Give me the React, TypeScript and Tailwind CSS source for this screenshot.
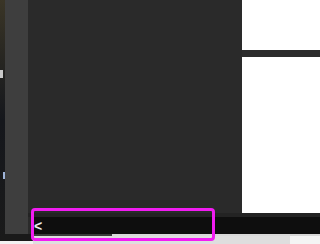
export default function App() {
  return (
    <div className="relative flex h-[244px] w-[320px] overflow-hidden bg-[#161616] font-['Liberation_Sans',sans-serif]">
      {/* wallpaper sliver */}
      <div className="relative h-[241px] w-[5px] bg-gradient-to-b from-[#3a3526] via-[#15171c] to-[#1a1a1a]">
        <div className="absolute left-0 top-[70px] h-[8px] w-[3px] bg-[#c9c9c9]" />
        <div className="absolute left-[3px] top-[172px] h-[7px] w-[2px] bg-[#9fb4d8]" />
      </div>

      <div className="flex flex-1 flex-col">
        <div className="flex h-[234px]">
          <div className="w-[23px] bg-[#3e3e3e]" />
          <div className="flex flex-1 flex-col bg-[#2a2a2a]">
            <div className="flex h-[213px]">
              <div className="w-[214px] bg-[#2a2a2a]" />
              <div className="flex flex-1 flex-col bg-white">
                <div className="h-[50px]" />
                <div className="h-[7px] bg-[#2c2c2c]" />
                <div className="flex-1" />
              </div>
            </div>
            <div className="h-[4px] bg-[#232323]" />
            <div className="ml-[5px] flex h-[17px] items-center bg-[#0e0e0e] pl-[1px] text-[14px] font-bold leading-none text-[#ececec]">
              &lt;
            </div>
          </div>
        </div>
        <div className="flex flex-1 flex-col">
          <div className="flex h-[2px]">
            <div className="w-[28px] bg-[#1a1a1a]" />
            <div className="w-[79px] bg-[#3a3a3a]" />
            <div className="flex-1 bg-[#d8d8d8]" />
          </div>
          <div className="flex flex-1">
            <div className="w-[28px] bg-[#1a1a1a]" />
            <div className="w-[257px] bg-[#dedede]" />
            <div className="flex-1 bg-[#f4f4f4]" />
          </div>
        </div>
      </div>

      {/* white edge under the left side */}
      <div className="pointer-events-none absolute bottom-0 left-0 h-[3px] w-[33px] bg-[#f2f2f2]" />

      {/* highlight annotation */}
      <div className="pointer-events-none absolute left-[31px] top-[208px] h-[33px] w-[184px] rounded-[4px] border-[3px] border-[#f21cf2]" />
    </div>
  );
}
